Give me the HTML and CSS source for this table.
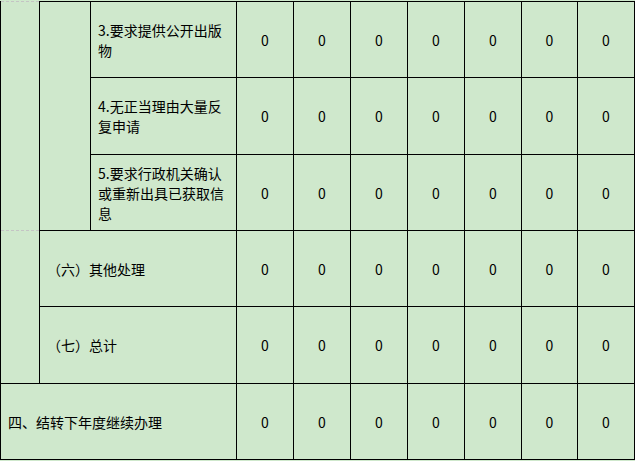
FILE: index.html
```html
<!DOCTYPE html>
<html lang="zh-CN">
<head>
<meta charset="utf-8">
<title>统计表</title>
<link rel="stylesheet" href="styles.css">
</head>
<body>
<table class="grid">
  <colgroup>
    <col class="c-a"><col class="c-b"><col class="c-c">
    <col class="c-n"><col class="c-n"><col class="c-n"><col class="c-n"><col class="c-n"><col class="c-n2"><col class="c-n">
  </colgroup>
  <tbody>
    <tr class="r1">
      <td class="side side-top" rowspan="3"></td>
      <td class="sub" rowspan="3"></td>
      <td class="label">3.要求提供公开出版物</td>
      <td class="num">0</td><td class="num">0</td><td class="num">0</td><td class="num">0</td><td class="num">0</td><td class="num">0</td><td class="num">0</td>
    </tr>
    <tr class="r2">
      <td class="label">4.无正当理由大量反复申请</td>
      <td class="num">0</td><td class="num">0</td><td class="num">0</td><td class="num">0</td><td class="num">0</td><td class="num">0</td><td class="num">0</td>
    </tr>
    <tr class="r3">
      <td class="label">5.要求行政机关确认或重新出具已获取信息</td>
      <td class="num">0</td><td class="num">0</td><td class="num">0</td><td class="num">0</td><td class="num">0</td><td class="num">0</td><td class="num">0</td>
    </tr>
    <tr class="r4">
      <td class="side side-lower" rowspan="2"></td>
      <td class="label" colspan="2">（六）其他处理</td>
      <td class="num">0</td><td class="num">0</td><td class="num">0</td><td class="num">0</td><td class="num">0</td><td class="num">0</td><td class="num">0</td>
    </tr>
    <tr class="r5">
      <td class="label" colspan="2">（七）总计</td>
      <td class="num">0</td><td class="num">0</td><td class="num">0</td><td class="num">0</td><td class="num">0</td><td class="num">0</td><td class="num">0</td>
    </tr>
    <tr class="r6">
      <td class="label" colspan="3">四、结转下年度继续办理</td>
      <td class="num">0</td><td class="num">0</td><td class="num">0</td><td class="num">0</td><td class="num">0</td><td class="num">0</td><td class="num">0</td>
    </tr>
  </tbody>
</table>
</body>
</html>
```
FILE: styles.css
```css
html, body {
  margin: 0;
  padding: 0;
  background: #cfe8cc;
}
body {
  padding-top: 1px;
  font-family: "Noto Sans CJK SC", "DejaVu Sans", sans-serif;
  font-size: 14px;
  color: #000;
}
.grid {
  border-collapse: collapse;
  table-layout: fixed;
  width: 634px;
  background: #cfe8cc;
}
.c-a { width: 39px; }
.c-b { width: 51px; }
.c-c { width: 146px; }
.c-n { width: 57px; }
.c-n2 { width: 56px; }

.grid td {
  border: 1px solid #000;
  padding: 0 7px;
  line-height: 20px;
  vertical-align: middle;
}
.r1 td, .r3 td, .r4 td, .r6 td { height: 75px; }
.r2 td, .r5 td { height: 76px; }
.grid td.side {
  border-bottom: none;
}
.grid td.side-top {
  border-top: 1px dashed #c4c4c4;
}
.grid td.side-lower {
  border-top: 1px dashed #c4c4c4;
  border-bottom: 1px solid #000;
}
.grid td.num {
  text-align: center;
  padding: 0;
}
.label {
  text-align: left;
}
```
